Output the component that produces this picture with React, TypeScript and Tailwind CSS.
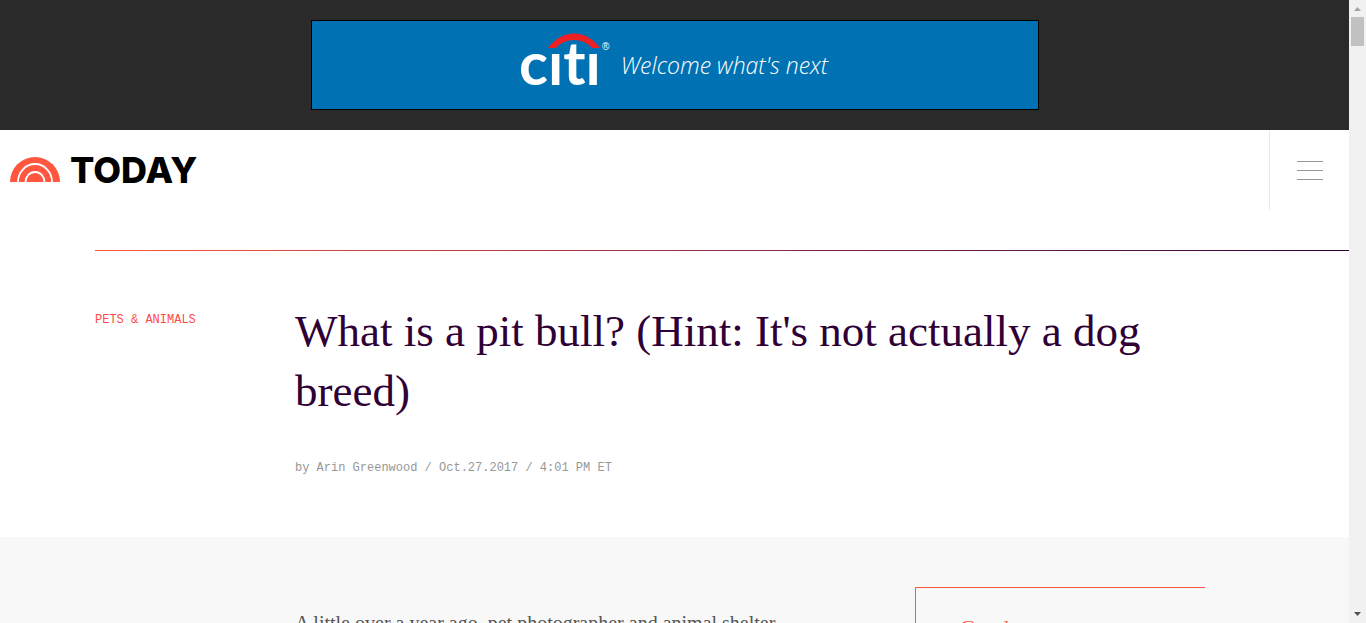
import React from "react";

function AdBanner() {
  return (
    <div className="flex shrink-0 justify-center bg-[#2a2a2a] py-5">
      <a
        href="#ad"
        className="flex h-[90px] w-[728px] items-center justify-center border border-black bg-[#0072b3] text-white"
      >
        <span className="block h-16 w-[90px]" aria-label="citi">
          <svg className="block h-14 w-[90px] overflow-visible" viewBox="0 0 90 56">
            <path d="M27 15 Q38 0.500 53 0.500 Q68 0.500 79 15 L71 15 Q64 7 53 7 Q42 7 35 15 Z" fill="#ee2024" />
            <text
              x="-2"
              y="52"
              fill="#fff"
              fontFamily="Lato, sans-serif"
              fontWeight="700"
              fontSize="60"
              className="[font-variant-ligatures:none]"
            >
              cıtı
            </text>
            <text x="81" y="17" fill="#fff" fontFamily="Liberation Sans, sans-serif" fontSize="10">
              ®
            </text>
          </svg>
        </span>
        <span className="ml-2.5 font-['Open_Sans',sans-serif] text-[23px] leading-8 font-light italic">
          Welcome what's next
        </span>
      </a>
    </div>
  );
}

function Header() {
  return (
    <header className="flex h-20 shrink-0 items-stretch justify-between">
      <a href="#home" className="flex items-center gap-2.5 pl-2.5" aria-label="TODAY home">
        <svg width="50" height="26" viewBox="0 0 50 26" aria-hidden="true">
          <path d="M0 25 A25 25 0 0 1 50 25 Z" fill="#ff5640" />
          <path d="M8 25 A17 18 0 0 1 42 25" fill="none" stroke="#fff" strokeWidth="1.800" />
          <path d="M15.500 25 A9.500 10 0 0 1 34.500 25" fill="none" stroke="#fff" strokeWidth="1.800" />
        </svg>
        <span className="font-['Inter',sans-serif] text-4xl leading-10 font-extrabold text-black">TODAY</span>
      </a>
      <button
        type="button"
        aria-label="Menu"
        className="flex w-20 flex-col items-center justify-center gap-2 border-l border-[#ebebeb]"
      >
        <span className="block h-px w-[26px] bg-[#979797]" />
        <span className="block h-px w-[26px] bg-[#979797]" />
        <span className="block h-px w-[26px] bg-[#979797]" />
      </button>
    </header>
  );
}

function ArticleHead() {
  return (
    <section className="shrink-0 pb-[59px]">
      <div className="mt-10 ml-[95px] h-px bg-linear-to-r from-[#ff5640] to-[#2f0036]" />
      <div className="flex px-[95px] pt-[50px]">
        <div className="w-[200px] shrink-0 pt-1">
          <a href="#pets" className="font-['Liberation_Mono',monospace] text-xs leading-5 text-[#ff4a45]">
            PETS &amp; ANIMALS
          </a>
        </div>
        <div className="max-w-[860px] flex-1">
          <h1 className="font-['Liberation_Serif',serif] text-[45px] leading-[60px] text-[#2f0036]">
            What is a pit bull? (Hint: It's not actually a dog breed)
          </h1>
          <p className="mt-[37px] font-['Liberation_Mono',monospace] text-xs leading-5 text-[#979797]">
            by Arin Greenwood / Oct.27.2017 / 4:01 PM ET
          </p>
        </div>
      </div>
    </section>
  );
}

function ArticleBody() {
  return (
    <section className="flex flex-1 bg-[#f8f8f8] pt-[50px] pl-[295px]">
      <p className="w-[620px] shrink-0 pt-5 font-['Liberation_Serif',serif] text-xl leading-8 text-[#555555]">
        A little over a year ago, pet photographer and animal shelter
      </p>
      <aside className="h-40 w-[290px] shrink-0 border-t border-l border-[#ff5640] px-11 pt-6">
        <h2 className="font-['Liberation_Serif',serif] text-[22px] leading-8 text-[#ff5640]">Good</h2>
      </aside>
    </section>
  );
}

function ScrollBar() {
  return (
    <div className="flex w-[17px] shrink-0 flex-col items-center justify-between bg-[#f1f1f1]" aria-hidden="true">
      <div className="flex flex-col items-center">
        <svg width="17" height="17" viewBox="0 0 17 17">
          <path d="M5 11 L8.500 7 L12 11 Z" fill="#a3a3a3" />
        </svg>
        <div className="h-[29px] w-[13px] bg-[#c1c1c1]" />
      </div>
      <svg width="17" height="17" viewBox="0 0 17 17">
        <path d="M5 6 L8.500 10 L12 6 Z" fill="#505050" />
      </svg>
    </div>
  );
}

export default function App() {
  return (
    <div className="flex h-screen overflow-hidden bg-white">
      <main className="flex min-w-0 flex-1 flex-col overflow-hidden">
        <AdBanner />
        <Header />
        <ArticleHead />
        <ArticleBody />
      </main>
      <ScrollBar />
    </div>
  );
}
